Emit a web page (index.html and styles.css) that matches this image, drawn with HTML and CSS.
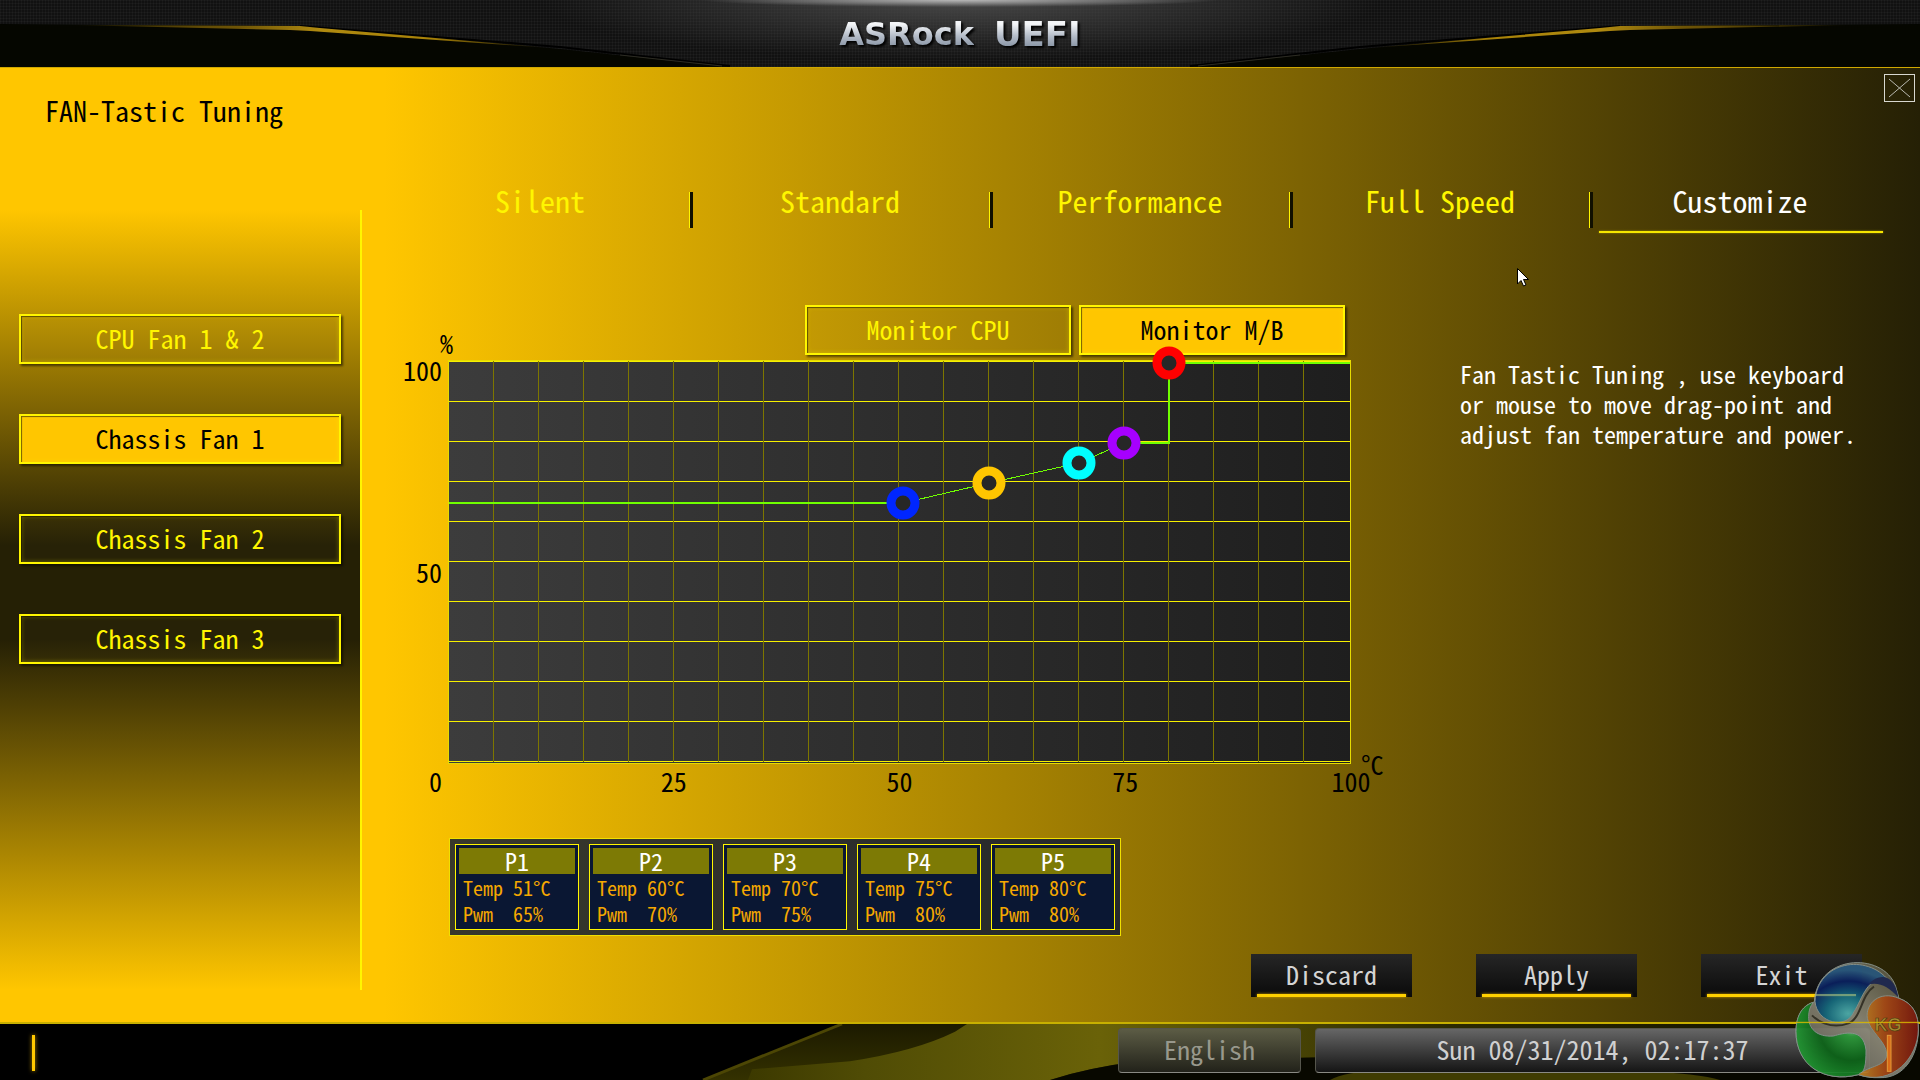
FILE: index.html
```html
<!DOCTYPE html>
<html lang="en">

<head>
  <meta charset="utf-8">
  <title>ASRock UEFI</title>
  <link rel="stylesheet" href="styles.css">
</head>

<body>
  <header class="top-bar">
    <svg class="bar-art" viewBox="0 0 1920 67" preserveAspectRatio="none" aria-hidden="true">
      <defs>
        <linearGradient id="gold" x1="0" x2="1" y1="0" y2="0">
          <stop offset="0" stop-color="#a88208" stop-opacity="0" />
          <stop offset=".35" stop-color="#6e5406" />
          <stop offset=".52" stop-color="#b08a10" />
          <stop offset=".75" stop-color="#a88208" />
          <stop offset="1" stop-color="#a88208" stop-opacity="0" />
        </linearGradient>
      </defs>
      <g id="wing">
        <path d="M0 24 L305 26 L560 49 L730 67 L0 67Z" fill="#050600" />
        <path d="M300 26 L560 47 L730 66" fill="none" stroke="#000" stroke-width="2" />
        <path d="M620 55 L722 66" fill="none" stroke="#2c2b22" />
        <path d="M70 25 L300 26 L320 28 L550 48 L310 31 L290 30Z" fill="url(#gold)" />
      </g>
      <use href="#wing" transform="translate(1920 0) scale(-1 1)" />
    </svg>
    <div class="logo"><span>ASRock</span><span class="uefi">UEFI</span></div>
  </header>

  <main class="screen">
    <h1 class="title">FAN-Tastic Tuning</h1>
    <button class="close" aria-label="Close">
      <svg viewBox="0 0 31 28" width="31" height="28"><path d="M5 5 L26 23 M26 5 L5 23" /></svg>
    </button>

    <div class="columns">
      <nav class="sidebar">
        <button class="box-btn">CPU Fan 1 &amp; 2</button>
        <button class="box-btn active">Chassis Fan 1</button>
        <button class="box-btn">Chassis Fan 2</button>
        <button class="box-btn">Chassis Fan 3</button>
      </nav>

      <section class="content">
        <nav class="tabs">
          <button class="tab">Silent</button>
          <button class="tab">Standard</button>
          <button class="tab">Performance</button>
          <button class="tab">Full Speed</button>
          <button class="tab active">Customize</button>
        </nav>

        <div class="workspace">
          <div class="chart">
            <div class="chart-head">
              <span class="percent">%</span>
              <button class="box-btn">Monitor CPU</button>
              <button class="box-btn active">Monitor M/B</button>
            </div>
            <div class="y-axis"><span>100</span><span>50</span></div>
            <div class="plot">
              <svg viewBox="0 0 903 404" role="img" aria-label="Fan curve">
                <defs>
                  <linearGradient id="plot-bg">
                    <stop offset="0" stop-color="#3c3c3c" />
                    <stop offset="1" stop-color="#1e1e1e" />
                  </linearGradient>
                  <pattern id="cols" width="45" height="404" patternUnits="userSpaceOnUse">
                    <rect width="1" height="404" fill="#7d7600" />
                  </pattern>
                  <pattern id="rows" y="1" width="903" height="40" patternUnits="userSpaceOnUse">
                    <rect width="903" height="1" fill="#f6f000" />
                  </pattern>
                </defs>
                <rect width="903" height="404" fill="url(#plot-bg)" />
                <rect x="1" y="1" width="901" height="401" fill="url(#rows)" />
                <rect x="1" y="1" width="898" height="401" fill="url(#cols)" />
                <rect x=".5" y=".5" width="902" height="403" fill="none" stroke="#e6dc00" />
                <path class="curve" d="M1 143 H455 M676 83 H721 V3 H902" />
                <path class="slope" d="M455 143 L541 123 L631 103 L676 83" />
                <g class="points">
                  <circle cx="455" cy="143" r="12" stroke="#0026ff" />
                  <circle cx="541" cy="123" r="12" stroke="#ffc600" />
                  <circle cx="631" cy="103" r="12" stroke="#00ffff" />
                  <circle cx="676" cy="83" r="12" stroke="#a600ff" />
                  <circle cx="721" cy="3" r="12" stroke="#ff0000" />
                </g>
              </svg>
              <span class="unit">°C</span>
            </div>
            <span class="zero">0</span>
            <div class="x-axis"><span>25</span><span>50</span><span>75</span><span>100</span></div>
          </div>
          <p class="help">Fan Tastic Tuning , use keyboard or mouse to move drag-point and adjust fan temperature and power.</p>
        </div>

        <div class="cards">
          <div class="card"><h2>P1</h2><pre>Temp 51°C
Pwm  65%</pre></div>
          <div class="card"><h2>P2</h2><pre>Temp 60°C
Pwm  70%</pre></div>
          <div class="card"><h2>P3</h2><pre>Temp 70°C
Pwm  75%</pre></div>
          <div class="card"><h2>P4</h2><pre>Temp 75°C
Pwm  80%</pre></div>
          <div class="card"><h2>P5</h2><pre>Temp 80°C
Pwm  80%</pre></div>
        </div>

        <div class="actions">
          <button class="action">Discard</button>
          <button class="action">Apply</button>
          <button class="action">Exit</button>
        </div>
      </section>
    </div>

    <svg class="cursor" viewBox="0 0 12 19" width="12" height="19" aria-hidden="true">
      <path d="M.5 .5 V16 L4 12.500 L6.500 18 L9 17 L6.500 11.500 H11.500Z" fill="#fff" stroke="#000" />
    </svg>
  </main>

  <footer class="bottom-bar">
    <svg class="bar-art" viewBox="0 0 1920 57" preserveAspectRatio="none" aria-hidden="true">
      <defs>
        <linearGradient id="olive" x1="0" x2="1" y1="0" y2="0">
          <stop offset="0" stop-color="#3c3900" />
          <stop offset=".1" stop-color="#504c05" />
          <stop offset=".3" stop-color="#6a6208" />
          <stop offset=".6" stop-color="#2c2a02" />
          <stop offset="1" stop-color="#0c0c00" />
        </linearGradient>
        <linearGradient id="shade" x1="0" x2="0" y1="0" y2="1">
          <stop offset="0" stop-color="#1c1a00" />
          <stop offset="1" stop-color="#343100" />
        </linearGradient>
      </defs>
      <path d="M842 0 H1920 V57 H703Z" fill="url(#shade)" />
      <path d="M967 0 L955 8 Q915 28 850 38 L752 46 L748 57 H1050 Q1090 44 1140 38 L1920 20 V0Z" fill="url(#olive)" />
      <path d="M1050 57 Q1090 44 1140 38 L1920 20 V57Z" fill="#080800" />
      <path d="M1330 57 Q1345 48 1380 48 H1640 Q1700 50 1720 57Z" fill="#403c02" />
      <path d="M842 0 L703 57" stroke="#4c4604" stroke-width="3" />
    </svg>
    <span class="marker"></span>
    <button class="language">English</button>
    <div class="clock">Sun 08/31/2014, 02:17:37</div>
  </footer>

  <svg class="watermark" viewBox="0 0 420 420" width="140" height="140" aria-hidden="true">
    <defs>
      <radialGradient id="kg-blue" cx=".45" cy=".85" r=".75">
        <stop offset="0" stop-color="#4fb0b0" />
        <stop offset=".4" stop-color="#146a80" />
        <stop offset=".75" stop-color="#0a2060" />
        <stop offset="1" stop-color="#2a5a80" />
      </radialGradient>
      <radialGradient id="kg-green" cx=".8" cy=".3" r=".8">
        <stop offset="0" stop-color="#9ad09a" />
        <stop offset=".2" stop-color="#2a9838" />
        <stop offset=".6" stop-color="#0c6418" />
        <stop offset="1" stop-color="#1f9430" />
      </radialGradient>
      <linearGradient id="kg-red">
        <stop offset="0" stop-color="#c08a28" />
        <stop offset=".45" stop-color="#a84a18" />
        <stop offset="1" stop-color="#7a1810" />
      </linearGradient>
      <linearGradient id="kg-grey" x1="1" x2="0" y1="0" y2="1">
        <stop offset="0" stop-color="#45412c" />
        <stop offset=".5" stop-color="#8b8878" />
        <stop offset="1" stop-color="#55534a" />
      </linearGradient>
    </defs>
    <g stroke="#8a9690" stroke-width="3" opacity=".92">
      <path d="M103 186 C112 35 325 35 350 150 L357 175 C400 190 416 225 415 270 C414 350 370 415 300 413 C275 414 255 411 235 404 C130 432 48 370 48 275 C48 225 70 194 103 186Z" fill="url(#kg-grey)" />
      <path d="M105 184 C112 62 262 40 326 122 C262 100 246 180 222 215 C200 270 110 250 105 184Z" fill="url(#kg-blue)" />
      <path d="M265 133 C300 95 345 105 355 172 C325 140 300 125 265 133Z" fill="#202a55" stroke="none" />
      <path d="M100 187 C72 195 48 220 48 275 C48 375 130 430 235 404 C255 398 258 375 258 330 C250 260 190 280 160 288 C110 292 85 265 86 230 C86 212 90 200 100 187Z" fill="url(#kg-green)" />
      <path d="M357 175 C300 150 255 190 262 235 C268 275 320 305 320 342 C320 380 270 375 235 404 C340 440 414 350 415 270 C416 225 400 190 357 175Z" fill="url(#kg-red)" />
      <path d="M282 140 C242 165 245 235 205 250 C150 270 110 240 96 226" fill="none" stroke="#36342a" stroke-width="6" />
    </g>
    <rect x="322" y="286" width="11" height="108" fill="#d96a18" stroke="#e09a38" stroke-width="3" />
    <text class="kg" x="324" y="274" text-anchor="middle">KG</text>
    <path d="M105 165 H228" stroke="#a8c080" stroke-width="6" opacity=".6" />
    <path d="M0 247 H420" stroke="#d8b800" stroke-width="3" />
  </svg>
</body>

</html>
```
FILE: styles.css
```css
* {
  box-sizing: border-box;
}

body {
  margin: 0;
  min-height: 100vh;
  display: flex;
  flex-direction: column;
  position: relative;
  overflow-x: hidden;
  background: #000;
  color: #000;
  font-family: "Noto Sans Mono CJK JP", "Noto Sans CJK JP", monospace;
  font-feature-settings: "hwid";
  font-size: 26px;
  line-height: 24px;
}

button {
  font: inherit;
  font-feature-settings: inherit;
  color: inherit;
  padding: 0;
  border: 0;
  background: none;
  cursor: pointer;
}

/* top bar */
.top-bar {
  position: relative;
  height: 67px;
  display: flex;
  align-items: center;
  justify-content: center;
  background:
    radial-gradient(ellipse 260px 7px at 50% 0, #b8b8b8, transparent),
    radial-gradient(ellipse 420px 60px at 50% 0, #484848, transparent),
    repeating-linear-gradient(90deg, #ffffff08 0 1px, transparent 1px 3px),
    repeating-linear-gradient(#ffffff08 0 1px, transparent 1px 3px),
    #111;
}

.bar-art {
  position: absolute;
  inset: 0;
  width: 100%;
  height: 100%;
}

.logo {
  position: relative;
  display: flex;
  gap: 20px;
  font-family: "DejaVu Sans", sans-serif;
  font-size: 32px;
  font-weight: bold;
  line-height: 40px;
  filter: drop-shadow(2px 2px 1px #000);
}

.logo span {
  background: linear-gradient(#f4f6f8 25%, #b4bcc8 55%, #8c98a8 80%);
  background-clip: text;
  -webkit-background-clip: text;
  color: transparent;
}

.logo .uefi {
  font-size: 34px;
}

/* main screen */
.screen {
  position: relative;
  flex: 1;
  border-top: 1px solid #d0a800;
  border-bottom: 2px solid #c8b000;
  background: linear-gradient(90deg, #ffc600 20%, #252005);
}

.title {
  margin: 22px 0 52px 45px;
  font-size: 28px;
  font-weight: normal;
  line-height: 40px;
}

.close {
  position: absolute;
  top: 6px;
  right: 5px;
  height: 28px;
  outline: 1px solid #d8d8d0;
  outline-offset: -1px;
}

.close svg {
  display: block;
  stroke: #b8b8b0;
}

.columns {
  display: grid;
  grid-template-columns: 362px 1fr;
}

.sidebar {
  display: flex;
  flex-direction: column;
  gap: 50px;
  height: 780px;
  margin-top: 28px;
  padding: 104px 19px 0;
  border-right: 2px solid #fff600;
  background: linear-gradient(#ffc600, #252005 43%, #252005 55%, #ffc600);
}

.box-btn {
  height: 50px;
  padding-bottom: 3px;
  border: 2px solid #fff600;
  background: #ffffff03;
  color: #fff600;
  box-shadow: 2px 2px 2px #0008, inset 1px 1px 1px #0008, inset 0 0 5px #fff60055;
}

.box-btn.active {
  background: #ffc600;
  color: #000;
}

.content {
  padding: 0 30px 24px 28px;
}

/* tabs */
.tabs {
  display: grid;
  grid-template-columns: repeat(5, 1fr);
}

.tab {
  position: relative;
  height: 52px;
  padding-bottom: 16px;
  color: #fff600;
  font-size: 30px;
  line-height: 36px;
}

.tab + .tab::before {
  content: "";
  position: absolute;
  left: -1px;
  top: 10px;
  width: 3px;
  height: 36px;
  border-left: 1px solid #fff600;
  background: #111000;
}

.tab.active {
  color: #fff;
}

.tab.active::after {
  content: "";
  position: absolute;
  left: 9px;
  right: 7px;
  bottom: 1px;
  height: 2px;
  background: #f6e600;
  box-shadow: 0 0 2px #a89800;
}

/* fan curve */
.workspace {
  display: grid;
  grid-template-columns: 961fr 430fr;
  column-gap: 109px;
  margin-top: 71px;
}

.chart {
  display: grid;
  grid-template-columns: 58px 1fr;
}

.chart-head {
  grid-column: 1 / -1;
  display: flex;
  gap: 8px;
  height: 55px;
  padding: 0 6px 5px 0;
}

.chart-head .box-btn {
  width: 266px;
}

.percent {
  align-self: flex-end;
  margin: 0 auto 0 50px;
}

.y-axis {
  display: flex;
  flex-direction: column;
  padding-right: 6px;
  line-height: 20px;
  text-align: right;
}

.y-axis span {
  flex: 1;
}

.plot {
  position: relative;
}

.plot svg {
  display: block;
  width: 100%;
  overflow: visible;
}

.curve,
.slope {
  fill: none;
  stroke: #70ff00;
  stroke-width: 2;
}

.slope {
  stroke-width: 1;
  shape-rendering: crispEdges;
}

.points circle {
  fill: #272727;
  stroke-width: 9;
}

.unit {
  position: absolute;
  left: 100%;
  bottom: -12px;
  margin-left: 10px;
}

.zero {
  padding: 5px 6px 0 0;
  text-align: right;
}

.x-axis {
  display: grid;
  grid-template-columns: repeat(4, 1fr);
  margin: 0 -12.5% 0 12.5%;
  padding: 5px 0 2px;
  text-align: center;
}

.help {
  margin: 54px 30px 0 0;
  color: #fff;
  font-size: 24px;
  line-height: 30px;
}

/* point cards */
.cards {
  display: flex;
  gap: 10px;
  width: max-content;
  margin: 43px 0 18px 59px;
  padding: 5px;
  border: 1px solid #f0e000;
  background: linear-gradient(90deg, #38382c, #25282c);
}

.card {
  width: 124px;
  height: 86px;
  padding: 3px;
  border: 1px solid #fff600;
  background: #0a1733;
}

.card h2 {
  margin: 0;
  background: #7d7a05;
  color: #fff;
  font-size: 24px;
  font-weight: normal;
  line-height: 26px;
  text-align: center;
}

.card pre {
  margin: 1px 0 0 4px;
  color: #f5a800;
  font: inherit;
  font-feature-settings: inherit;
  font-size: 20px;
  line-height: 26px;
}

.actions {
  display: flex;
  justify-content: flex-end;
  gap: 64px;
  padding-right: 28px;
}

.action {
  position: relative;
  width: 161px;
  height: 43px;
  padding-bottom: 4px;
  background: linear-gradient(#262626, #0a0a0a);
  color: #d4d4d4;
}

.action::after {
  content: "";
  position: absolute;
  left: 6px;
  right: 6px;
  bottom: 0;
  height: 3px;
  background: #ffd000;
  box-shadow: 0 0 3px #c89800;
}

.cursor {
  position: absolute;
  left: 1517px;
  top: 200px;
}

/* bottom bar */
.bottom-bar {
  position: relative;
  display: flex;
  align-items: center;
  gap: 14px;
  height: 56px;
  padding: 0 50px 4px 32px;
}

.marker {
  position: relative;
  width: 3px;
  height: 36px;
  margin: 6px auto 0 0;
  background: #ffc800;
  box-shadow: 0 0 4px #b08a00;
}

.language,
.clock {
  position: relative;
  height: 45px;
  padding-bottom: 3px;
  border: 1px solid #55554c;
  border-bottom-color: #8a8a84;
  border-radius: 4px;
  line-height: 40px;
  text-align: center;
}

.language {
  width: 183px;
  background: linear-gradient(#5c5c45, #22221a);
  color: #98988c;
}

.clock {
  width: 555px;
  background: linear-gradient(#666, #151515);
  color: #d0d0d0;
}

.watermark {
  position: absolute;
  right: 0;
  bottom: 0;
}

.kg {
  fill: #a88a30;
  stroke: #4a3a10;
  stroke-width: 2px;
  font-family: "Liberation Sans", sans-serif;
  font-size: 54px;
  font-weight: bold;
}
```
